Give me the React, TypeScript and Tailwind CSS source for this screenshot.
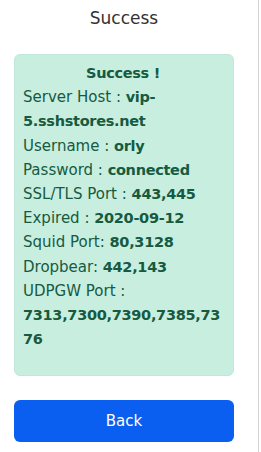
import React from "react";

export default function App() {
  const rows: [string, string][] = [
    ["Server Host : ", "vip-5.sshstores.net"],
    ["Username : ", "orly"],
    ["Password : ", "connected"],
    ["SSL/TLS Port : ", "443,445"],
    ["Expired : ", "2020-09-12"],
    ["Squid Port: ", "80,3128"],
    ["Dropbear: ", "442,143"],
    ["UDPGW Port : ", "7313,7300,7390,7385,7376"],
  ];
  return (
    <div className="w-[261px] h-[452px] bg-white flex" style={{ fontFamily: "'DejaVu Sans', 'Liberation Sans', sans-serif" }}>
      <div className="w-[248px] px-[14px] flex flex-col">
        <div className="h-[37px] flex items-center justify-center text-[17px] text-[#333]">Success</div>
        <div className="mt-[17px] h-[322px] rounded-[6px] bg-[#c8eee0] border border-[#bfe8d8] pt-[6px] pl-[8px] pr-[10px] text-[15px] leading-[24.2px] text-[#165a40] break-words">
          <div className="text-center font-bold text-[14.5px] tracking-[-0.3px]">Success !</div>
          {rows.map(([k, v]) => (
            <div key={k}>
              {k}
              <b className="text-[14.5px] tracking-[-0.3px]">{v}</b>
            </div>
          ))}
        </div>
        <button className="mt-[24px] h-[42px] w-full rounded-[6px] bg-[#0b5ff0] text-white text-[15px]">Back</button>
      </div>
      <div className="ml-[10px] w-[1px] h-full bg-[#d4d4d4]" />
    </div>
  );
}
